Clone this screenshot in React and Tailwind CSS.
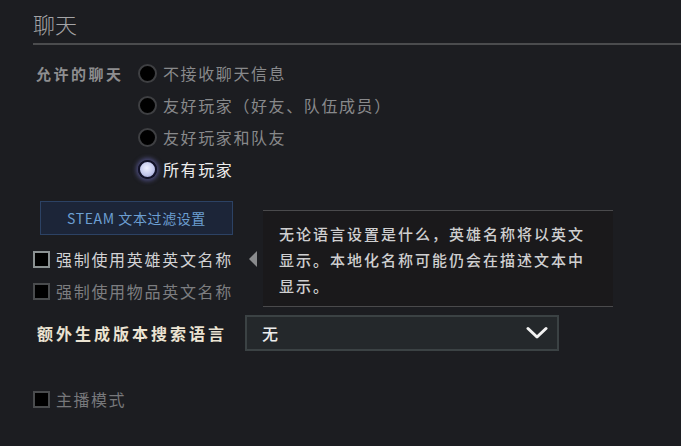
const chatOptions = [
  { label: '不接收聊天信息', checked: false },
  { label: '友好玩家（好友、队伍成员）', checked: false },
  { label: '友好玩家和队友', checked: false },
  { label: '所有玩家', checked: true },
];

const font = { fontFamily: '"Noto Sans CJK SC", "Noto Sans", sans-serif' };

const Radio = ({ checked }) =>
  checked ? (
    <span className="flex-shrink-0 w-[19px] h-[19px] rounded-full border-[2px] border-[#111128] bg-[radial-gradient(circle_at_45%_40%,#eef0ff_0%,#c3c8ec_55%,#8f95c9_100%)] shadow-[0_0_4px_2px_rgba(110,110,190,0.55)]" />
  ) : (
    <span className="flex-shrink-0 w-[19px] h-[19px] rounded-full border-[2px] border-[#3e3f42] bg-black" />
  );

const Checkbox = ({ dim }) => (
  <span
    className={
      'flex-shrink-0 w-[17px] h-[17px] border-[2px] bg-black ' +
      (dim ? 'border-[#4a4c4e]' : 'border-[#8b9192]')
    }
  />
);

const App = () => {
  return (
    <div className="w-[681px] h-[446px] overflow-hidden bg-[#1c1d21]" style={font}>
      {/* header */}
      <div className="ml-[33px] pt-[8px] pb-[5px] border-b-2 border-[#4b4c4e]">
        <span className="block text-[22px] leading-[30px] font-light text-[#a4a4a6]">聊天</span>
      </div>

      {/* allowed chat */}
      <div className="flex mt-[12px] pl-[36px]">
        <div className="w-[102px] h-[32px] pt-[3px] flex items-center text-[15px] font-bold text-[#8e8e90] tracking-[2.5px]">
          允许的聊天
        </div>
        <div className="flex flex-col">
          {chatOptions.map((o) => (
            <div key={o.label} className="h-[32px] flex items-center">
              <Radio checked={o.checked} />
              <span
                className={
                  'ml-[6px] text-[16px] tracking-[1.6px] ' +
                  (o.checked ? 'text-[#ececec]' : 'text-[#88898b]')
                }
              >
                {o.label}
              </span>
            </div>
          ))}
        </div>
      </div>

      {/* filter button */}
      <div className="mt-[16px] ml-[40px] w-[193px] h-[34px] flex items-center justify-center border border-[#2c4264] bg-[#1c2538] text-[14px] tracking-[0.6px] text-[#6c9fd2]">
        STEAM 文本过滤设置
      </div>

      {/* checkboxes */}
      <div className="mt-[8px] pl-[33px]">
        <div className="relative h-[32px] flex items-center">
          <Checkbox />
          <span className="ml-[6px] text-[16px] tracking-[1.7px] text-[#d2d2d4]">强制使用英雄英文名称</span>

          {/* tooltip */}
          <div className="absolute left-[216px] top-[-33px] flex items-center">
            <div className="w-0 h-0 border-y-[8px] border-y-transparent border-r-[8px] border-r-[#8a8b8d]" />
            <div className="ml-[6px] w-[350px] h-[97px] border-y border-[#4a4a4c] bg-[#1a191b] pl-[16px] pt-[10px]">
              <p className="text-[15px] leading-[26px] tracking-[2px] text-[#cfcfd0] font-medium">
                无论语言设置是什么，英雄名称将以英文
                <br />
                显示。本地化名称可能仍会在描述文本中
                <br />
                显示。
              </p>
            </div>
          </div>
        </div>
        <div className="h-[32px] flex items-center">
          <Checkbox dim />
          <span className="ml-[6px] text-[16px] tracking-[1.7px] text-[#7c7d80]">强制使用物品英文名称</span>
        </div>
      </div>

      {/* search language */}
      <div className="mt-[8px] flex items-center pl-[37px]">
        <div className="w-[208px] text-[16px] font-bold tracking-[3px] text-[#ebe3d2]">额外生成版本搜索语言</div>
        <div className="w-[314px] h-[36px] flex items-center justify-between border-[2px] border-[#3b4244] bg-[#24282b] pl-[15px] pr-[9px]">
          <span className="text-[16px] font-medium text-[#ececec]">无</span>
          <svg width="22" height="14" viewBox="0 0 22 14" fill="none">
            <path d="M2 2.5 L11 11 L20 2.5" stroke="#f2f2f2" strokeWidth="3" strokeLinecap="round" strokeLinejoin="round" />
          </svg>
        </div>
      </div>

      {/* streamer mode */}
      <div className="mt-[32px] pl-[33px] h-[32px] flex items-center">
        <Checkbox dim />
        <span className="ml-[6px] text-[16px] tracking-[1.5px] text-[#77787b]">主播模式</span>
      </div>
    </div>
  );
};

export default App;
